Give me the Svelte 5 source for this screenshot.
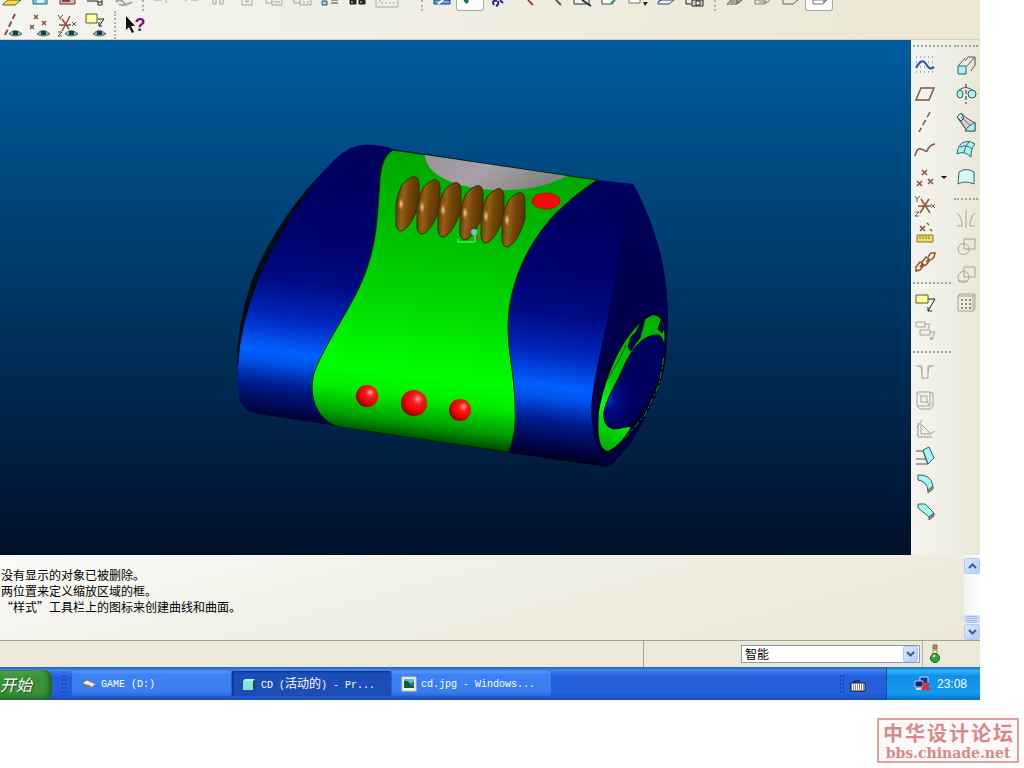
<script>
    // an icon is a list of shapes: [path, fill, stroke, stroke width, dash]
    const brown = "#84543e";
    const grey = "#a5a59b";
    const aqua = "#a8f4f0";
    const teal = "#35606a";
    const eye = [
        ["M9 21Q15 14 22 21Q15 25 9 21Z", "#8fb5b0", "#48716e", 1],
        ["M13 18H18V22H13Z", "#163f49", "none", 1]
    ];

    const fileTools = [
        { name: "Open", shapes: [["M3 4L8 0H21L15 5H3Z", "#f5df4c", "#6b5a18", 1]] },
        { name: "Save", shapes: [["M5 0V4H19V0", "#6fc4e4", "#35627c", 1], ["M9 0V3H16V0", "#e4f4fa", "none", 1]] },
        { name: "Print", shapes: [["M4 0V4H19V0", "#cfc0b4", "#4b3c34", 1], ["M6 1H14", "none", "#a33", 2]] },
        { name: "Send", shapes: [["M3 1H14V5H18V0M14 2H18", "none", "#222", 1]] },
        { name: "Link", shapes: [["M4 2Q8 -2 11 2T20 2M7 4Q12 7 18 3", "none", grey, 2]] }
    ];
    const editTools = [
        { name: "Undo", shapes: [["M3 0H11M15 0V3", "none", grey, 1]] },
        { name: "Redo", shapes: [["M6 1L9 -1M12 0H19", "none", grey, 1]] },
        { name: "Regenerate", shapes: [["M6 0V4H9V0M13 0V4H16V0", "none", grey, 1]] }
    ];
    const modelTools = [
        { name: "Paste", shapes: [["M7 0V5H17V0M10 0H14M10 2H14", "none", grey, 1]] },
        { name: "Copy", shapes: [["M3 0V3H9M9 0V5H19V0M11 2H17", "none", grey, 1]] },
        { name: "Paste special", shapes: [["M3 0V3H9M9 0V5H20V0M13 1V4M17 1V4", "none", grey, 1]] },
        { name: "Model tree", shapes: [["M3 1H8V5H3Z", "#9dd9ea", "#245a73", 1], ["M12 0H19M12 3H19", "none", "#444", 1]] },
        { name: "Find", shapes: [["M3 0H9V4H3ZM12 0H18V4H12Z", "#222", "#222", 1], ["M5 1V3M14 1V3", "none", "#eee", 1]] },
        { name: "Select", shapes: [["M1 0V7H23V0", "none", "#aaa99c", 1], ["M5 0V3H19V0", "none", grey, 1, "2 2"]] }
    ];
    const viewTools = [
        { name: "Repaint", shapes: [["M4 0V4H20V0Z", "#6aa8e8", "#1c3c80", 1], ["M8 4L14 -1", "none", "#fff", 2]] },
        { name: "Spin center", pressed: true, shapes: [["M6 0Q8 5 10 2V0Z", "#1f9c84", "#0b5448", 1]] },
        { name: "Orient mode", shapes: [["M8 5Q5 0 11 1M12 1Q13 5 10 6M14 0L17 3", "none", "#24307c", 2]] },
        { name: "Zoom in", shapes: [["M14 0L19 5", "none", brown, 2]] },
        { name: "Zoom out", shapes: [["M14 0L19 5", "none", brown, 2]] },
        { name: "Refit", shapes: [["M4 0V4H19V0", "#eef4f8", "#333", 1], ["M12 0L21 6", "none", "#333", 2]] },
        { name: "Reorient", shapes: [["M4 0V4H14L17 0", "#fff", "#444", 1], ["M13 3L17 0", "none", "#2a9080", 2]] },
        { name: "Saved views", shapes: [["M3 0V3H14V0", "#fff", "#777", 1], ["M17 2H22L19 6Z", "#222", "none", 1]] },
        { name: "Layers", shapes: [["M4 2L7 0H20L15 4H4ZM4 2L8 -1", "#eaf0f8", "#3b4766", 1]] },
        { name: "View manager", shapes: [["M4 0V4H9M10 0V6H21V0Z", "#d9d6c8", "#222", 1], ["M14 1H18V5H14Z", "#fff", "#222", 1]] }
    ];
    const displayTools = [
        { name: "Wireframe", shapes: [["M4 4H14L19 0M4 4L8 0H18M14 4V0M7 2H17", "none", "#605c50", 1]] },
        { name: "Hidden line", shapes: [["M4 4H14L19 0M4 4V0H14V4M8 2H16", "none", "#8a8474", 1]] },
        { name: "No hidden", shapes: [["M4 0V4H14L19 0", "none", "#605c50", 1]] },
        { name: "Shading", pressed: true, shapes: [["M6 0V4H16L20 0Z", "#fff", "#777", 1], ["M16 4L20 0H16Z", "#999", "none", 1]] }
    ];
    const topGroups = [fileTools, editTools, modelTools, viewTools, displayTools];

    const datumTools = [
        { name: "Show axes", shapes: [["M5 22L15 1", "none", brown, 2, "6 3"], ...eye] },
        { name: "Show points", shapes: [["M6 2L10 6M10 2L6 6M14 8L18 12M18 8L14 12M2 12L6 16M6 12L2 16", "none", brown, 1.5], ...eye] },
        { name: "Show coordinate systems", shapes: [["M2 2L4 5L7 2M4 5V7M16 9L20 13M20 9L16 13M2 19H6L2 23H6", "none", "#555", 1], ["M3 12H15M14 3L6 18M6 6L13 16", "none", brown, 1.5], ...eye] },
        { name: "Show annotations", shapes: [["M2 1H13V10H2Z", "#ffffa6", "#5c5a28", 1], ["M14 6H20L15 13V9M15 13H18", "none", "#222", 1], ...eye] }
    ];

    const leftPalette = [
        [
            { name: "Style", shapes: [["M3 3H21M3 8H21M3 13H21M3 18H21", "none", "#4c6cc0", 1, "1 3"], ["M3 14Q9 3 13 10T21 13", "none", "#2753a8", 2]] },
            { name: "Datum plane", shapes: [["M8 6H21L16 18H3Z", "none", brown, 1.5]] },
            { name: "Datum axis", shapes: [["M17 2L6 22", "none", brown, 1.5, "6 3"]] },
            { name: "Datum curve", shapes: [["M2 18C5 3 13 16 14 13Q16 7 22 6", "none", brown, 1.5]] },
            { name: "Datum point", menu: true, shapes: [["M9 4L14 9M14 4L9 9M4 15L9 20M9 15L4 20M15 13L20 18M20 13L15 18", "none", brown, 1.5]] },
            { name: "Coordinate system", shapes: [["M5 12H18M8 5L17 19M16 5L7 19", "none", "#94582e", 1.5], ["M2 2L4 5L7 2M4 5V8M18 10L22 14M22 10L18 14M2 18H6L2 22H6", "none", "#666", 1]] },
            { name: "Analysis", shapes: [["M4 13H20V20H4Z", "#f1dc62", "#8e7a28", 1], ["M7 14V17M10 14V17M13 14V17M16 14V17", "none", "#8e7a28", 1], ["M7 4L12 9M12 4L7 9M14 1L16 3M17 7L19 9", "none", brown, 1.5]] },
            { name: "Reference", shapes: [["M3 17L7 12L11 15L7 20L3 21ZM9 12L13 7L17 10L13 15L9 16ZM15 7L18 3L22 3L21 7L18 10M7 17L10 13M13 12L16 9", "none", "#9a5228", 1.5]] }
        ],
        [
            { name: "Annotation", shapes: [["M3 4H15V12H3Z", "#ffff9c", "#5c5a28", 1], ["M15 8H22L15 20M15 16V20H19", "none", "#222", 1]] },
            { name: "Annotation feature", shapes: [["M3 3H12V8H3ZM7 11H17V16H7Z", "none", grey, 1], ["M12 5H17L15 10M17 13H22L18 21M17 18L18 21L21 19", "none", grey, 1]] }
        ],
        [
            { name: "Hole", shapes: [["M3 6H9V18M21 6H15V18M9 18H15M6 6Q9 8 9 12M18 6Q15 8 15 12", "none", grey, 1]] },
            { name: "Shell", shapes: [["M4 4H17V18H4ZM17 4L20 5V18L17 21H7L4 18M8 8H14V14H8ZM8 8L6 6M14 14L17 18", "none", grey, 1]] },
            { name: "Rib", shapes: [["M8 8L18 18H8ZM4 12L9 4M5 7V21H19M17 18L22 15", "none", grey, 1], ["M5 9V20M8 21H20", "none", grey, 1, "1 2"]] },
            { name: "Draft", shapes: [["M10 6L16 3L21 14L15 20L13 16Z", aqua, teal, 1], ["M3 7H10M3 15H13M3 20H15M10 6L15 20", "none", "#555", 1]] },
            { name: "Round", shapes: [["M5 3Q18 2 20 14L15 19Q14 9 5 8Z", aqua, teal, 1], ["M15 21V18L20 14V17Z", "#888", "#666", 1]] },
            { name: "Chamfer", shapes: [["M5 4H12L21 13L16 17L5 8Z", aqua, teal, 1], ["M16 20V17L21 13V16Z", "#888", "#666", 1]] }
        ]
    ];
    const rightPalette = [
        [
            { name: "Extrude", shapes: [["M11 7L14 3H21V11L17 17M4 12L11 4M13 12L20 4", "none", "#555", 1], ["M4 12H12V20H4Z", aqua, teal, 1]] },
            { name: "Revolve", shapes: [["M3 12A3 4 0 1 0 9 12A3 4 0 1 0 3 12M14 12A4 4 0 1 0 22 12A4 4 0 1 0 14 12", aqua, teal, 1], ["M12 2V22", "none", "#222", 1, "4 2"], ["M5 8Q12 3 18 8", "none", teal, 1]] },
            { name: "Sweep", shapes: [["M3 7L7 3L14 9L21 13V21H13Z", "#d9d2d4", "#555", 1], ["M3 7L7 3L10 8L7 11ZM14 17L21 12V21H11Z", aqua, teal, 1], ["M7 11L13 21M7 7L17 16", "none", "#8a6470", 1]] },
            { name: "Boundary blend", shapes: [["M3 16Q4 6 10 4Q16 2 21 6Q17 10 17 19Q10 12 3 16Z", aqua, teal, 1], ["M6 9Q13 6 18 11M10 14Q11 8 15 4", "none", teal, 1]] },
            { name: "Fill", shapes: [["M5 6Q12 1 20 6V18Q11 14 4 18Z", "#d6f8f4", teal, 1]] }
        ],
        [
            { name: "Mirror", shapes: [["M12 3V21M3 6Q8 10 8 19H3M21 6Q16 10 16 19H21", "none", grey, 1]] },
            { name: "Merge", shapes: [["M10 4H21V14H10ZM4 14A5 5 0 1 0 15 14A5 5 0 1 0 4 14", "none", grey, 1]] },
            { name: "Trim", shapes: [["M10 4H21V14H10ZM4 14A5 5 0 1 0 15 14A5 5 0 1 0 4 14M4 18H14", "none", grey, 1]] },
            { name: "Pattern", shapes: [["M4 5L6 3H21V18L19 20H4ZM4 5H19V20M19 5L21 3", "none", grey, 1], ["M7 9H18M7 13H18M7 17H18", "none", "#8b8b84", 2, "2 2"]] }
        ]
    ];

    const messages = [
        "没有显示的对象已被删除。",
        "两位置来定义缩放区域的框。",
        "“样式”工具栏上的图标来创建曲线和曲面。"
    ];

    const tasks = [
        { icon: "drive", title: ["GAME (D:)"] },
        { icon: "part", title: ["CD (", "活动的", ") - Pr..."], active: true },
        { icon: "photo", title: ["cd.jpg - Windows..."] }
    ];

    const ribs = [[0, 0], [21, 3], [42, 6], [64, 9], [85, 12], [106, 16]];

    let filter = $state("智能");
</script>

{#snippet glyph(shapes)}
    {#each shapes as [d, fill, stroke, width, dash]}
        <path {d} {fill} {stroke} stroke-width={width} stroke-dasharray={dash} />
    {/each}
{/snippet}

<div class="page">
    <div class="desktop">
        <header class="toolbars">
            <div class="toolbar cut">
                {#each topGroups as group, i}
                    <div class="group group-{i}">
                        {#each group as tool}
                            <button class="short" class:pressed={tool.pressed} aria-label={tool.name}>
                                <svg viewBox="0 0 24 11" width="24" height="11">{@render glyph(tool.shapes)}</svg>
                            </button>
                        {/each}
                    </div>
                {/each}
            </div>
            <div class="toolbar">
                <div class="group group-0">
                    {#each datumTools as tool}
                        <button class="tool" aria-label={tool.name}>
                            <svg viewBox="0 0 24 24" width="24" height="24">{@render glyph(tool.shapes)}</svg>
                        </button>
                    {/each}
                </div>
                <div class="group group-1">
                    <button class="tool help" aria-label="Context help">
                        <svg viewBox="0 0 10 24" width="10" height="24">
                            <path d="M1 3V17L4 14L7 20L9 19L6 13H10Z" fill="#111" />
                        </svg>
                        <b>?</b>
                    </button>
                </div>
            </div>
        </header>

        <div class="work">
            <main class="viewport">
                <svg class="model" viewBox="0 40 911 515" role="img" aria-label="CD">
                    <defs>
                        <linearGradient id="blue" gradientUnits="userSpaceOnUse" x1="430" y1="160" x2="394" y2="440">
                            <stop offset="0" stop-color="#00005c" />
                            <stop offset=".3" stop-color="#00006a" />
                            <stop offset=".48" stop-color="#000a82" />
                            <stop offset=".62" stop-color="#0026bc" />
                            <stop offset=".74" stop-color="#0060ff" />
                            <stop offset=".78" stop-color="#0054ec" />
                            <stop offset=".86" stop-color="#001c90" />
                            <stop offset=".95" stop-color="#000548" />
                            <stop offset="1" stop-color="#00001e" />
                        </linearGradient>
                        <linearGradient id="green" gradientUnits="userSpaceOnUse" x1="430" y1="160" x2="394" y2="440">
                            <stop offset="0" stop-color="#00a800" />
                            <stop offset=".25" stop-color="#00bc00" />
                            <stop offset=".5" stop-color="#00d800" />
                            <stop offset=".76" stop-color="#00ff00" />
                            <stop offset=".84" stop-color="#00ee00" />
                            <stop offset=".93" stop-color="#00a000" />
                            <stop offset="1" stop-color="#003c00" />
                        </linearGradient>
                        <linearGradient id="cap" x1="0" y1="0" x2="0" y2="1">
                            <stop offset="0" stop-color="#000058" />
                            <stop offset=".6" stop-color="#00004c" />
                            <stop offset="1" stop-color="#00003e" />
                        </linearGradient>
                        <linearGradient id="ring" gradientUnits="userSpaceOnUse" x1="655" y1="315" x2="607" y2="452">
                            <stop offset="0" stop-color="#00b000" />
                            <stop offset=".5" stop-color="#00c400" />
                            <stop offset=".7" stop-color="#00ff10" />
                            <stop offset="1" stop-color="#00a800" />
                        </linearGradient>
                        <radialGradient id="disc" gradientUnits="userSpaceOnUse" cx="607" cy="400" r="26">
                            <stop offset="0" stop-color="#0044d8" />
                            <stop offset=".35" stop-color="#000c88" />
                            <stop offset="1" stop-color="#00005e" />
                        </radialGradient>
                        <linearGradient id="lens" x1="0" y1="0" x2="1" y2=".3">
                            <stop offset="0" stop-color="#98929a" />
                            <stop offset=".5" stop-color="#a7a1a7" />
                            <stop offset="1" stop-color="#848480" />
                        </linearGradient>
                        <linearGradient id="rib" x1="0" y1=".4" x2="1" y2=".6">
                            <stop offset="0" stop-color="#5c3600" />
                            <stop offset=".3" stop-color="#946018" />
                            <stop offset=".55" stop-color="#744606" />
                            <stop offset="1" stop-color="#543200" />
                        </linearGradient>
                        <radialGradient id="glint">
                            <stop offset="0" stop-color="#ffe49c" />
                            <stop offset="1" stop-color="#c08838" stop-opacity="0" />
                        </radialGradient>
                        <radialGradient id="knob" cx=".65" cy=".35" r=".7">
                            <stop offset="0" stop-color="#ff9a9a" />
                            <stop offset=".3" stop-color="#ff1818" />
                            <stop offset=".7" stop-color="#e80000" />
                            <stop offset="1" stop-color="#800000" />
                        </radialGradient>
                    </defs>

                    <path fill="#020a12" d="M352 147C320 168 272 226 251 283Q237 325 237 365L244 368L290 222Z" />
                    <path fill="url(#blue)" d="M362 145Q378 144 393 149L597 180L633 184C650 215 668 260 668 320C667 375 648 430 613 463Q609 468 600 466L510 453L330 425L258 414Q240 411 238 392Q236 350 248 310C262 262 290 214 320 176Q342 147 362 145Z" />
                    <path fill="url(#green)" stroke="#002808" stroke-width="1" d="M393 150Q382 156 380 178C377 222 377 250 358 290C344 318 322 350 314 373C307 400 320 422 340 427L508 452Q517 435 515 405C514 370 508 355 508 325C509 278 532 238 557 212Q574 195 597 180Z" />
                    <path fill="url(#lens)" d="M425 155L567 176Q540 190 505 190C470 191 426 180 425 155Z" />
                    <path fill="url(#cap)" d="M633 184C650 215 668 260 668 320C667 375 648 430 613 463L606 465Q588 435 592 398C596 365 606 330 612 295Q621 240 627 200Z" />

                    <path fill="#00002c" d="M653 313C624 325 603 373 596 415Q594 455 608 453C630 448 656 405 664 370Q673 318 653 313Z" />
                    <path fill="url(#ring)" d="M653 315C626 326 605 375 599 412Q596 450 608 451Q620 446 631 427L615 429Q602 426 604 412C608 396 616 384 622 371C630 352 645 333 660 335L664 345Q667 316 653 315Z" />
                    <path fill="url(#disc)" stroke="#00083c" d="M658 335C641 334 629 353 621 373C615 386 608 396 604 411Q602 426 613 429Q629 430 641 411C656 389 664 367 664 346Q663 336 658 335Z" />
                    <path fill="#000050" stroke="#001a10" d="M645 319L640 324L636 332L631 337L628 347L631 351L636 343L640 338ZM661 320L658 329L662 333L664 329Z" />
                    <path fill="none" stroke="#00a410" d="M625 438L645 415L659 385L664 356" stroke-dasharray="7 3 2 2" />
                    <path fill="none" stroke="#005c10" d="M607 380L619 360L626 345" />

                    {#each ribs as [x, y]}
                        <g transform="translate({x} {y})">
                            <path fill="url(#rib)" stroke="#3b2a00" d="M412 177Q419 175 419 185V203Q415 216 411 222Q406 230 401 231Q397 231 396 224V204Q398 192 402 185Q407 179 412 177Z" />
                            <ellipse cx="401" cy="204" rx="3" ry="7" fill="url(#glint)" />
                        </g>
                    {/each}

                    <ellipse cx="546" cy="201" rx="14" ry="8" fill="#f80808" stroke="#a02000" />
                    <circle cx="367" cy="396" r="11" fill="url(#knob)" />
                    <circle cx="414" cy="403" r="13" fill="url(#knob)" />
                    <circle cx="460" cy="410" r="11" fill="url(#knob)" />

                    <path d="M458 239V242H475V232" fill="none" stroke="#5cff9c" stroke-width="1" />
                    <circle cx="474" cy="232" r="3" fill="#6cc4dc" />
                    <path d="M477 236V240" stroke="#f02020" stroke-width="2" />
                </svg>
            </main>

            <aside class="palettes">
                {#each [leftPalette, rightPalette] as palette, i}
                    <div class="palette" class:second={i === 1}>
                        {#each palette as section}
                            <div class="section">
                                {#each section as tool}
                                    <button class="tool" aria-label={tool.name}>
                                        <svg viewBox="0 0 24 24" width="24" height="24">{@render glyph(tool.shapes)}</svg>
                                        {#if tool.menu}<i class="more"></i>{/if}
                                    </button>
                                {/each}
                            </div>
                        {/each}
                    </div>
                {/each}
            </aside>
        </div>

        <section class="messages">
            <div class="log" lang="zh-CN">
                {#each messages as message}
                    <p>{message}</p>
                {/each}
            </div>
            <div class="scroll">
                <button aria-label="Scroll up">
                    <svg viewBox="0 0 9 6" width="9" height="6"><path d="M1 5L4.500 1.500L8 5" /></svg>
                </button>
                <span class="thumb"></span>
                <button aria-label="Scroll down">
                    <svg viewBox="0 0 9 6" width="9" height="6"><path d="M1 1L4.500 4.500L8 1" /></svg>
                </button>
            </div>
        </section>

        <div class="status">
            <span class="pane"></span>
            <div class="filter">
                <select aria-label="选择过滤器" bind:value={filter}>
                    <option>智能</option>
                </select>
                <span class="drop">
                    <svg viewBox="0 0 9 6" width="9" height="6"><path d="M1 1L4.500 4.500L8 1" /></svg>
                </span>
            </div>
            <div class="light">
                <svg viewBox="0 0 12 20" width="12" height="20">
                    <path d="M4 1H8V5H4Z" fill="#b48a6c" stroke="#7d6a4c" />
                    <path d="M4 6H8V10H4Z" fill="#f4f0a0" stroke="#9c9a50" />
                    <circle cx="6" cy="14" r="4.500" fill="#2ca838" stroke="#0d5a1c" />
                    <path d="M4 13L6 11" stroke="#b8f4b8" stroke-width="2" />
                </svg>
            </div>
        </div>

        <footer class="taskbar">
            <button class="start" lang="zh-CN"><span>开始</span></button>
            <i class="grip"></i>
            <nav>
                {#each tasks as task}
                    <button class="task" class:active={task.active}>
                        <svg viewBox="0 0 16 16" width="16" height="16">
                            {#if task.icon === "drive"}
                                <path d="M1 7L6 4L15 8L10 12Z" fill="#e4e4e4" stroke="#777" />
                                <path d="M1 7L10 10V13L2 9Z" fill="#777" />
                                <path d="M4 7L7 6" stroke="#fff" stroke-width="2" />
                            {:else if task.icon === "part"}
                                <path d="M2 5L4 3H14V12L12 14H2Z" fill="#17544e" />
                                <path d="M2 5H12V14H2Z" fill="#86e6dc" />
                                <path d="M2 5L4 3H14L12 5Z" fill="#b8f8f0" />
                            {:else}
                                <path d="M1 1H15V15H1Z" fill="#f2f4ea" stroke="#c8cca8" />
                                <path d="M3 3H13V9H3Z" fill="#67aef0" />
                                <path d="M3 5Q7 4 9 8L13 6V12H3Z" fill="#145c28" />
                                <path d="M8 9L13 7V10Z" fill="#2474d0" />
                            {/if}
                        </svg>
                        <span class="title" lang="zh-CN">{#each task.title as part, i}{#if i === 1}<span class="zh">{part}</span>{:else}{part}{/if}{/each}</span>
                    </button>
                {/each}
            </nav>
            <i class="grip"></i>
            <button class="keyboard" aria-label="Input language">
                <svg viewBox="0 0 16 12" width="16" height="12">
                    <path d="M4 3V1H9V0" fill="none" stroke="#111" />
                    <path d="M1 3H15V11H1Z" fill="#fff" stroke="#111" />
                    <path d="M3 5H14M3 7H14M3 9H14" stroke="#111" stroke-dasharray="1 1" />
                </svg>
            </button>
            <div class="tray">
                <svg viewBox="0 0 17 16" width="17" height="16">
                    <path d="M6 1H14V8H6Z" fill="#15369c" stroke="#d0d8e8" />
                    <path d="M1 5H9V11H1Z" fill="#0c2470" stroke="#c4cce0" />
                    <path d="M2 13H9" stroke="#cdd" stroke-width="2" />
                    <path d="M8 7L15 14M15 7L8 14" stroke="#e02c28" stroke-width="3" />
                </svg>
                <time>23:08</time>
            </div>
        </footer>
    </div>

    <div class="forum">
        <a class="stamp" href="http://bbs.chinade.net" lang="zh-CN">
            <span class="name">{#each "中华设计论坛" as char}<span>{char}</span>{/each}</span>
            <span class="site">bbs.chinade.net</span>
        </a>
    </div>
</div>

<style>
    :global(body) {
        margin: 0;
        background: #fff;
    }

    .page {
        font: 12px/16px "Noto Sans CJK SC", sans-serif;
        color: #000;
    }

    .desktop {
        margin-right: 44px;
        background: #ece9d8;
    }

    button {
        display: flex;
        align-items: center;
        justify-content: center;
        padding: 0;
        border: 0;
        background: none;
        color: inherit;
        font: inherit;
    }

    svg {
        display: block;
        flex: none;
    }

    p {
        margin: 0;
    }

    /* top toolbars */
    .toolbars {
        height: 39px;
        border-bottom: 1px solid #d8d0b8;
        background: linear-gradient(100deg, #f4f4f0, #eeecde 60%, #ece6d2);
        overflow: hidden;
    }

    .toolbar {
        display: flex;
        margin-left: -2px;
    }

    .cut {
        height: 11px;
    }

    .group {
        display: flex;
    }

    .group-1 {
        border-left: 2px dotted #b4b2a6;
        margin-left: 4px;
        padding-left: 5px;
    }

    .group-3,
    .group-4 {
        border-left: 2px dotted #b4b2a6;
        padding-left: 5px;
    }

    .group-3 {
        margin-left: 20px;
    }

    .group-4 {
        margin-left: 6px;
    }

    .short {
        width: 28px;
        height: 11px;
    }

    .pressed {
        box-sizing: border-box;
        border: 1px solid #a8aaa4;
        border-top: 0;
        border-radius: 0 0 3px 3px;
        background: #fdfdfc;
    }

    .tool {
        width: 28px;
        height: 28px;
    }

    .help b {
        color: #7a0f80;
        font: bold 18px/20px "Liberation Sans", sans-serif;
    }

    /* model window and side palettes */
    .work {
        display: flex;
    }

    .viewport {
        flex: 1;
        background: linear-gradient(#005c9e, #00102a);
    }

    .model {
        width: 100%;
        height: auto;
    }

    .palettes {
        display: flex;
        gap: 3px;
        width: 67px;
        padding-left: 2px;
        background: linear-gradient(90deg, #f4f3ee, #efeee4 60%, #e9e7d6);
    }

    .palette {
        width: 38px;
    }

    .second {
        width: 24px;
    }

    .section {
        padding-top: 5px;
    }

    .section + .section {
        padding-top: 6px;
    }

    .section::before {
        content: "";
        display: block;
        margin-bottom: 5px;
        border-top: 2px dotted #a8a69a;
    }

    .section .tool {
        position: relative;
        width: 24px;
    }

    .more {
        position: absolute;
        left: 28px;
        top: 12px;
        border: 3px solid transparent;
        border-top-color: #111;
    }

    /* message log */
    .messages {
        display: flex;
        height: 85px;
        background: linear-gradient(165deg, #fafaf8, #f0efe4 45%, #eae8d6);
    }

    .log {
        flex: 1;
        padding: 12px 1px;
    }

    .scroll {
        display: flex;
        flex-direction: column;
        width: 16px;
        padding-top: 3px;
        background: linear-gradient(90deg, #f2f1ec, #fff);
    }

    .scroll button,
    .drop {
        box-sizing: border-box;
        height: 16px;
        border: 1px solid #b4c8f4;
        border-radius: 2px;
        background: linear-gradient(135deg, #dce8ff, #b4ccfa);
    }

    .scroll path,
    .drop path {
        fill: none;
        stroke: #405c94;
        stroke-width: 2;
    }

    .thumb {
        height: 8px;
        margin-top: auto;
        margin-bottom: 1px;
        border: solid #c8d8fc;
        border-width: 0 3px;
        border-radius: 2px;
        background: repeating-linear-gradient(#d4e2fe 0 1px, #9cb8ec 1px 2px);
    }

    /* status bar */
    .status {
        display: flex;
        align-items: center;
        height: 26px;
        border-top: 1px solid #a5a295;
        background: #ece9d8;
    }

    .pane {
        flex: 1;
        align-self: stretch;
        margin-right: 97px;
        border-right: 1px solid #a5a295;
    }

    .filter {
        position: relative;
        width: 179px;
    }

    select {
        display: block;
        box-sizing: border-box;
        width: 100%;
        height: 18px;
        padding: 0 3px;
        border: 1px solid #7f9db9;
        border-radius: 0;
        appearance: none;
        background: #fff;
        color: #000;
        font: 12px/16px "Noto Sans CJK SC", sans-serif;
    }

    .drop {
        position: absolute;
        top: 1px;
        right: 2px;
        display: flex;
        align-items: center;
        justify-content: center;
        width: 15px;
        pointer-events: none;
    }

    .light {
        display: flex;
        align-items: center;
        align-self: stretch;
        width: 51px;
        margin-left: 2px;
        padding-left: 6px;
        border-left: 1px solid #b8b5a6;
    }

    /* task bar */
    .taskbar {
        display: flex;
        align-items: center;
        height: 33px;
        background: linear-gradient(#2c5cb4, #3c84f0 3px, #2f70ea 6px, #245edb 10px, #2460de 26px, #1c4cb8);
        color: #fff;
    }

    .start {
        align-self: flex-end;
        justify-content: flex-start;
        width: 52px;
        height: 30px;
        border-radius: 0 8px 8px 0;
        background: linear-gradient(#5cae54, #3c9438 6px, #389038 22px, #2c7830);
        box-shadow: inset -3px 0 4px #1c6020;
    }

    .start span {
        padding-bottom: 2px;
        font-size: 16px;
        font-style: italic;
        text-shadow: 1px 1px 1px #1c4c1c;
    }

    .grip {
        width: 6px;
        height: 20px;
        margin: 0 5px 0 9px;
        background: radial-gradient(circle, #143f9c 1px, transparent 1px) 0 0 / 3px 4px;
    }

    nav {
        display: flex;
        flex: 1;
        gap: 1px;
    }

    .task {
        box-sizing: border-box;
        justify-content: flex-start;
        gap: 4px;
        width: 159px;
        height: 25px;
        padding-left: 9px;
        border-radius: 2px;
        background: linear-gradient(#5a98fc, #3c81f3 4px, #3a7cf0 21px, #2c68d8);
    }

    .active {
        background: #1c4eb6;
        box-shadow: inset 1px 1px 2px #0c2c7c;
    }

    .title {
        padding-top: 3px;
        font: 10px/16px "Liberation Mono", "Noto Sans CJK SC", monospace;
        white-space: nowrap;
    }

    .zh {
        font: 12px/12px "Noto Sans CJK SC", sans-serif;
    }

    .keyboard {
        width: 16px;
        margin-right: 20px;
        padding-top: 4px;
    }

    .tray {
        display: flex;
        align-items: center;
        justify-content: flex-end;
        align-self: stretch;
        gap: 6px;
        box-sizing: border-box;
        width: 94px;
        padding-right: 13px;
        border-left: 1px solid #0c4c98;
        background: linear-gradient(#1c70c8, #2cb4f8 4px, #128ee8 9px, #149af0 26px, #0c70c8);
        font: 12px/16px "Liberation Sans", sans-serif;
    }

    /* forum stamp */
    .forum {
        display: flex;
        justify-content: flex-end;
        padding: 18px 5px 5px;
    }

    .stamp {
        box-sizing: border-box;
        width: 142px;
        height: 45px;
        padding: 0 4px;
        border: 2px solid #e0a0a0;
        background: #fdf8f8;
        color: #d48a8a;
        text-decoration: none;
    }

    .name {
        display: flex;
        justify-content: space-between;
        font: bold 20px/25px "Noto Sans CJK SC", sans-serif;
    }

    .site {
        display: block;
        text-align: center;
        font: bold 14px/16px "DejaVu Serif", serif;
    }
</style>
